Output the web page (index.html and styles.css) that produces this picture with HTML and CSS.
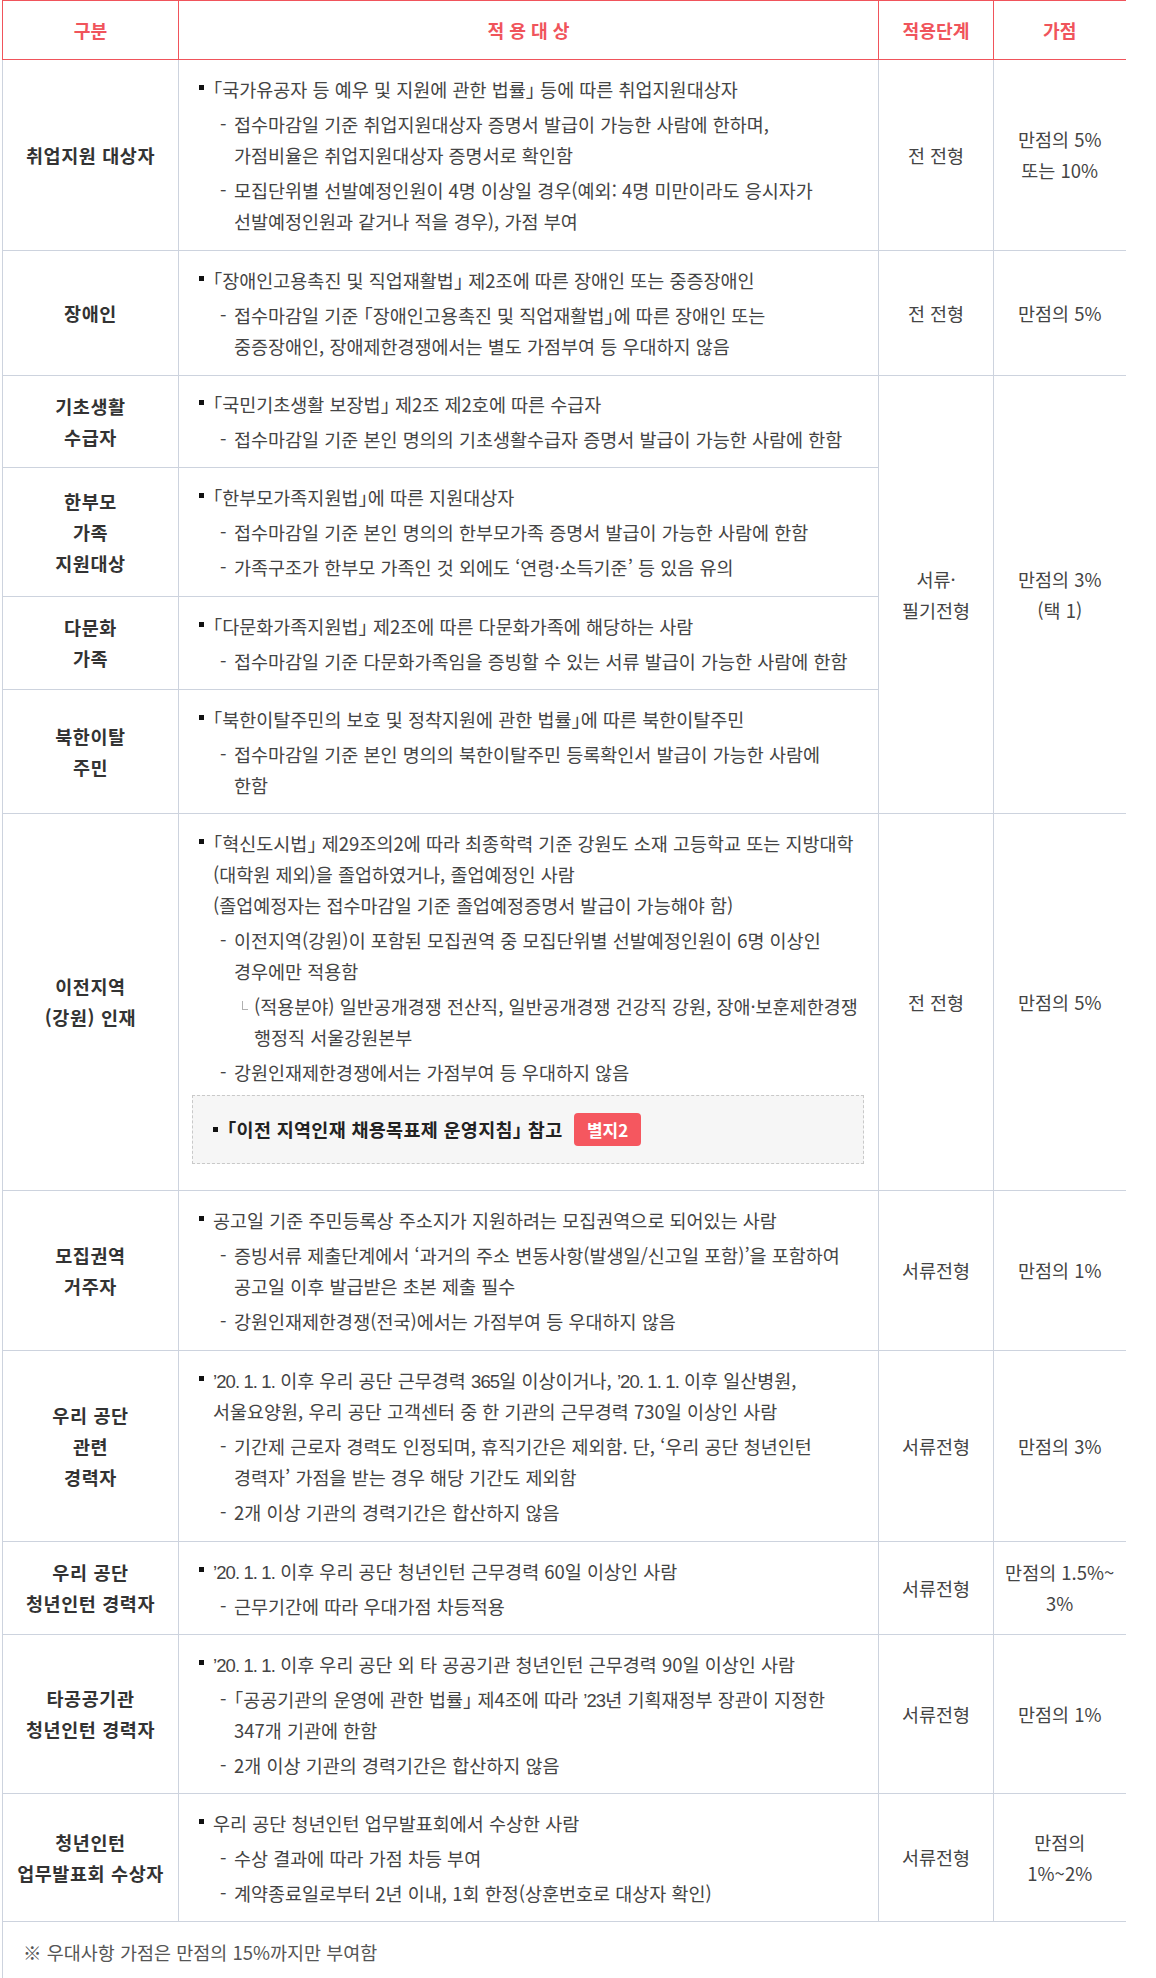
FILE: index.html
```html
<!DOCTYPE html>
<html lang="ko">
<head>
<meta charset="utf-8">
<title>우대사항 가점</title>
<link rel="stylesheet" href="styles.css">
</head>
<body>
<div class="wrap">
<table class="bonus">
  <colgroup>
    <col class="c1"><col class="c2"><col class="c3"><col class="c4">
  </colgroup>
  <thead>
    <tr>
      <th>구분</th>
      <th>적 용 대 상</th>
      <th>적용단계</th>
      <th class="last">가점</th>
    </tr>
  </thead>
  <tbody>
    <tr>
      <td class="label">취업지원 대상자</td>
      <td class="content">
        <ul class="items">
          <li class="b"><span class="br">「</span>국가유공자 등 예우 및 지원에 관한 법률<span class="br">」</span> 등에 따른 취업지원대상자
            <ul class="sub">
              <li>접수마감일 기준 취업지원대상자 증명서 발급이 가능한 사람에 한하며,<br>가점비율은 취업지원대상자 증명서로 확인함</li>
              <li>모집단위별 선발예정인원이 4명 이상일 경우(예외: 4명 미만이라도 응시자가<br>선발예정인원과 같거나 적을 경우), 가점 부여</li>
            </ul>
          </li>
        </ul>
      </td>
      <td class="stage">전 전형</td>
      <td class="point last">만점의 5%<br>또는 10%</td>
    </tr>
    <tr>
      <td class="label">장애인</td>
      <td class="content">
        <ul class="items">
          <li class="b"><span class="br">「</span>장애인고용촉진 및 직업재활법<span class="br">」</span> 제2조에 따른 장애인 또는 중증장애인
            <ul class="sub">
              <li>접수마감일 기준 <span class="br">「</span>장애인고용촉진 및 직업재활법<span class="br">」</span>에 따른 장애인 또는<br>중증장애인, 장애제한경쟁에서는 별도 가점부여 등 우대하지 않음</li>
            </ul>
          </li>
        </ul>
      </td>
      <td class="stage">전 전형</td>
      <td class="point last">만점의 5%</td>
    </tr>
    <tr class="short">
      <td class="label">기초생활<br>수급자</td>
      <td class="content">
        <ul class="items">
          <li class="b"><span class="br">「</span>국민기초생활 보장법<span class="br">」</span> 제2조 제2호에 따른 수급자
            <ul class="sub">
              <li>접수마감일 기준 본인 명의의 기초생활수급자 증명서 발급이 가능한 사람에 한함</li>
            </ul>
          </li>
        </ul>
      </td>
      <td class="stage" rowspan="4">서류·<br>필기전형</td>
      <td class="point last" rowspan="4">만점의 3%<br>(택 1)</td>
    </tr>
    <tr>
      <td class="label">한부모<br>가족<br>지원대상</td>
      <td class="content">
        <ul class="items">
          <li class="b"><span class="br">「</span>한부모가족지원법<span class="br">」</span>에 따른 지원대상자
            <ul class="sub">
              <li>접수마감일 기준 본인 명의의 한부모가족 증명서 발급이 가능한 사람에 한함</li>
              <li>가족구조가 한부모 가족인 것 외에도 ‘연령·소득기준’ 등 있음 유의</li>
            </ul>
          </li>
        </ul>
      </td>
    </tr>
    <tr class="tight">
      <td class="label">다문화<br>가족</td>
      <td class="content">
        <ul class="items">
          <li class="b"><span class="br">「</span>다문화가족지원법<span class="br">」</span> 제2조에 따른 다문화가족에 해당하는 사람
            <ul class="sub">
              <li>접수마감일 기준 다문화가족임을 증빙할 수 있는 서류 발급이 가능한 사람에 한함</li>
            </ul>
          </li>
        </ul>
      </td>
    </tr>
    <tr class="tight">
      <td class="label">북한이탈<br>주민</td>
      <td class="content">
        <ul class="items">
          <li class="b"><span class="br">「</span>북한이탈주민의 보호 및 정착지원에 관한 법률<span class="br">」</span>에 따른 북한이탈주민
            <ul class="sub">
              <li>접수마감일 기준 본인 명의의 북한이탈주민 등록확인서 발급이 가능한 사람에<br>한함</li>
            </ul>
          </li>
        </ul>
      </td>
    </tr>
    <tr>
      <td class="label">이전지역<br>(강원) 인재</td>
      <td class="content">
        <ul class="items">
          <li class="b"><span class="br">「</span>혁신도시법<span class="br">」</span> 제29조의2에 따라 최종학력 기준 강원도 소재 고등학교 또는 지방대학<br>(대학원 제외)을 졸업하였거나, 졸업예정인 사람<br>(졸업예정자는 접수마감일 기준 졸업예정증명서 발급이 가능해야 함)
            <ul class="sub">
              <li>이전지역(강원)이 포함된 모집권역 중 모집단위별 선발예정인원이 6명 이상인<br>경우에만 적용함
                <ul class="subsub">
                  <li>(적용분야) 일반공개경쟁 전산직, 일반공개경쟁 건강직 강원, 장애·보훈제한경쟁<br>행정직 서울강원본부</li>
                </ul>
              </li>
              <li>강원인재제한경쟁에서는 가점부여 등 우대하지 않음</li>
            </ul>
          </li>
        </ul>
        <div class="note-box">
          <ul class="items">
            <li class="b strong"><span class="br">「</span>이전 지역인재 채용목표제 운영지침<span class="br">」</span> 참고 <span class="badge">별지2</span></li>
          </ul>
        </div>
      </td>
      <td class="stage">전 전형</td>
      <td class="point last">만점의 5%</td>
    </tr>
    <tr>
      <td class="label">모집권역<br>거주자</td>
      <td class="content">
        <ul class="items">
          <li class="b">공고일 기준 주민등록상 주소지가 지원하려는 모집권역으로 되어있는 사람
            <ul class="sub">
              <li>증빙서류 제출단계에서 ‘과거의 주소 변동사항(발생일/신고일 포함)’을 포함하여<br>공고일 이후 발급받은 초본 제출 필수</li>
              <li>강원인재제한경쟁(전국)에서는 가점부여 등 우대하지 않음</li>
            </ul>
          </li>
        </ul>
      </td>
      <td class="stage">서류전형</td>
      <td class="point last">만점의 1%</td>
    </tr>
    <tr>
      <td class="label">우리 공단<br>관련<br>경력자</td>
      <td class="content">
        <ul class="items">
          <li class="b"><span class="dt">’20. 1. 1.</span> 이후 우리 공단 근무경력 <span class="dt">365</span>일 이상이거나, <span class="dt">’20. 1. 1.</span> 이후 일산병원,<br>서울요양원, 우리 공단 고객센터 중 한 기관의 근무경력 730일 이상인 사람
            <ul class="sub">
              <li>기간제 근로자 경력도 인정되며, 휴직기간은 제외함. 단, ‘우리 공단 청년인턴<br>경력자’ 가점을 받는 경우 해당 기간도 제외함</li>
              <li>2개 이상 기관의 경력기간은 합산하지 않음</li>
            </ul>
          </li>
        </ul>
      </td>
      <td class="stage">서류전형</td>
      <td class="point last">만점의 3%</td>
    </tr>
    <tr class="tight">
      <td class="label">우리 공단<br>청년인턴 경력자</td>
      <td class="content">
        <ul class="items">
          <li class="b"><span class="dt">’20. 1. 1.</span> 이후 우리 공단 청년인턴 근무경력 60일 이상인 사람
            <ul class="sub">
              <li>근무기간에 따라 우대가점 차등적용</li>
            </ul>
          </li>
        </ul>
      </td>
      <td class="stage">서류전형</td>
      <td class="point last">만점의 1.5%~<br>3%</td>
    </tr>
    <tr class="tight">
      <td class="label">타공공기관<br>청년인턴 경력자</td>
      <td class="content">
        <ul class="items">
          <li class="b"><span class="dt">’20. 1. 1.</span> 이후 우리 공단 외 타 공공기관 청년인턴 근무경력 90일 이상인 사람
            <ul class="sub">
              <li><span class="br">「</span>공공기관의 운영에 관한 법률<span class="br">」</span> 제4조에 따라 <span class="dt">’23</span>년 기획재정부 장관이 지정한<br>347개 기관에 한함</li>
              <li>2개 이상 기관의 경력기간은 합산하지 않음</li>
            </ul>
          </li>
        </ul>
      </td>
      <td class="stage">서류전형</td>
      <td class="point last">만점의 1%</td>
    </tr>
    <tr class="tight">
      <td class="label">청년인턴<br>업무발표회 수상자</td>
      <td class="content">
        <ul class="items">
          <li class="b">우리 공단 청년인턴 업무발표회에서 수상한 사람
            <ul class="sub">
              <li>수상 결과에 따라 가점 차등 부여</li>
              <li>계약종료일로부터 2년 이내, 1회 한정(상훈번호로 대상자 확인)</li>
            </ul>
          </li>
        </ul>
      </td>
      <td class="stage">서류전형</td>
      <td class="point last">만점의<br>1%~2%</td>
    </tr>
    <tr>
      <td class="foot" colspan="4">※ 우대사항 가점은 만점의 15%까지만 부여함</td>
    </tr>
  </tbody>
</table>
</div>
</body>
</html>
```

FILE: styles.css
```css
html, body {
  margin: 0;
  padding: 0;
  background: #ffffff;
}

body {
  font-family: "Noto Sans CJK KR", "Noto Sans", sans-serif;
  font-size: 18.5px;
  line-height: 31px;
  color: #444444;
}

.br {
  font-feature-settings: "halt";
}

.dt {
  font-family: "Liberation Sans", "Noto Sans CJK KR", sans-serif;
  line-height: 1;
  letter-spacing: -0.9px;
}

.wrap {
  padding-left: 2px;
}

.bonus {
  border-collapse: collapse;
  table-layout: fixed;
  width: 1123px;
}

.c1 { width: 176px; }
.c2 { width: 700px; }
.c3 { width: 115px; }
.c4 { width: 132px; }

.bonus th {
  height: 58px;
  padding: 0;
  color: #f0545b;
  font-weight: 700;
  font-size: 18.2px;
  text-align: center;
  vertical-align: middle;
  border: 1px solid #f0545b;
}

.bonus th.last {
  border-right: none;
}

.bonus td {
  border: 1px solid #cdd3de;
  vertical-align: middle;
  padding: 0 4px;
}

.bonus td.last {
  border-right: none;
}

.label {
  text-align: center;
  font-weight: 700;
  color: #333333;
  letter-spacing: 0.6px;
}

.stage,
.point {
  text-align: center;
}

.bonus td.content {
  padding: 14px 0 13px 13px;
}

.bonus .tight td.content {
  padding-bottom: 12px;
}

.bonus .short td.content {
  padding-top: 13px;
  padding-bottom: 12px;
}

.items,
.sub,
.subsub {
  list-style: none;
  margin: 0;
  padding: 0;
}

.items {
  padding-left: 7px;
}

.content li {
  white-space: nowrap;
}

.b {
  position: relative;
  padding-left: 14px;
}

.b::before {
  content: "";
  position: absolute;
  left: 0;
  top: 11px;
  width: 5px;
  height: 5px;
  background: #111111;
}

.sub > li {
  position: relative;
  padding-left: 21px;
  margin-top: 4px;
}

.sub > li::before {
  content: "-";
  position: absolute;
  left: 7px;
  top: 0;
}

.subsub > li {
  position: relative;
  padding-left: 20px;
  margin-top: 4px;
}

.subsub > li::before {
  content: "";
  position: absolute;
  left: 8px;
  top: 10px;
  width: 5px;
  height: 8px;
  border-left: 1px solid #b0b0b0;
  border-bottom: 1px solid #b0b0b0;
}

.note-box {
  margin: 7px 14px 13px 0;
  height: 69px;
  box-sizing: border-box;
  border: 1px dashed #c9c9c9;
  background: #f6f6f6;
  padding: 0 0 0 13px;
  display: flex;
  align-items: center;
}

.note-box .items {
  padding-left: 7px;
}

.strong {
  font-weight: 700;
  color: #222222;
  line-height: 33px;
  letter-spacing: 0.3px;
}

.strong::before {
  top: 14px;
}

.badge {
  display: inline-block;
  vertical-align: top;
  margin-left: 6px;
  height: 33px;
  line-height: 33px;
  padding: 0 13px;
  border-radius: 4px;
  background: #f5575f;
  color: #ffffff;
  font-size: 17px;
  font-weight: 700;
  letter-spacing: 0;
}

.bonus td.foot {
  padding: 15px 20px;
  color: #555555;
  border-bottom: none;
  border-right: none;
}
```
